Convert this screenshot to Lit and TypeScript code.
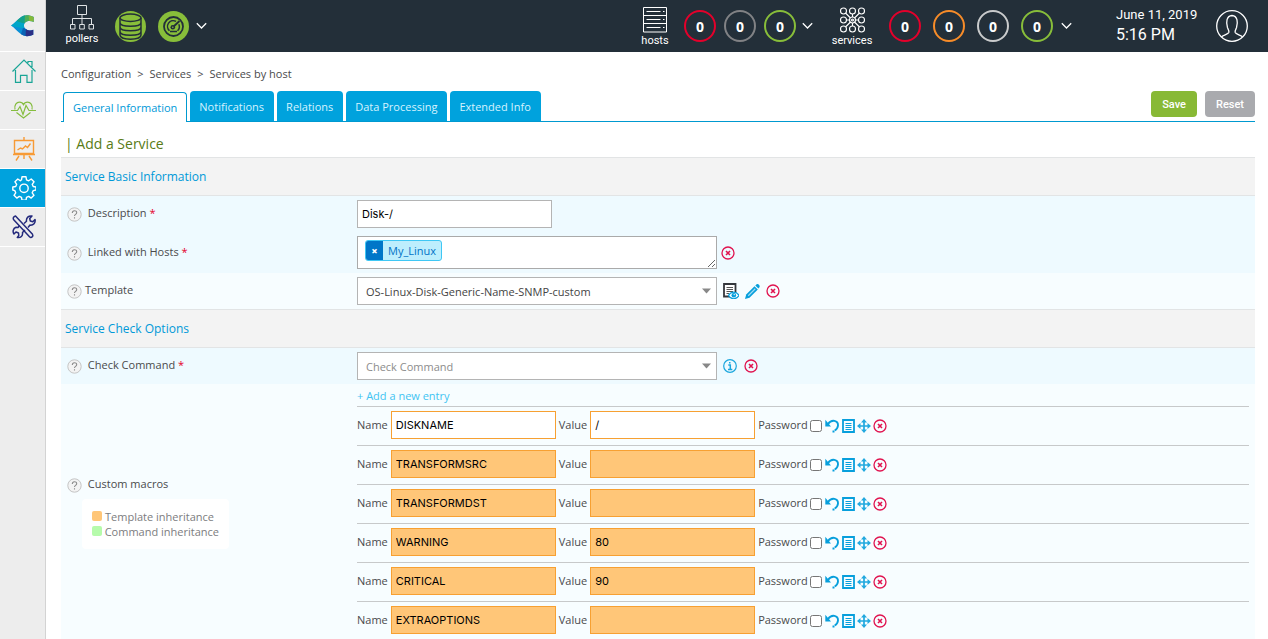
import { LitElement, html, svg, css, nothing } from "lit";
import { customElement } from "lit/decorators.js";
import { classMap } from "lit/directives/class-map.js";

interface Macro {
  name: string;
  value: string;
  inherited: boolean;
}

const MACROS: Macro[] = [
  { name: "DISKNAME", value: "/", inherited: false },
  { name: "TRANSFORMSRC", value: "", inherited: true },
  { name: "TRANSFORMDST", value: "", inherited: true },
  { name: "WARNING", value: "80", inherited: true },
  { name: "CRITICAL", value: "90", inherited: true },
  { name: "EXTRAOPTIONS", value: "", inherited: true },
];

const TABS = ["General Information", "Notifications", "Relations", "Data Processing", "Extended Info"];

const logoIcon = html`<svg width="24" height="22" viewBox="0 0 24 22" aria-hidden="true">
  <clipPath id="logo-c">
    <path d="M22.800 2C18-.500 13-.500 9.500 2.500 7 4.500 3 8.500 0 10.500c3 2 7 6.300 9.500 8.300 3.500 3 8.500 3 12.800 1v-5c-3 1.200-6 .800-7.800-1-2-1.700-2-4.800 0-6.500 2-1.700 5-1.800 8.300-.300z" />
  </clipPath>
  <g clip-path="url(#logo-c)">
    <path d="M0 0h24v22H0z" fill="#0a8fd6" />
    <path d="M17 0h7v9h-7z" fill="#84b93a" />
    <path d="M13 0h4.500l1 8H12z" fill="#4fae57" />
    <path d="M5 0h9l-.500 9L4 6z" fill="#12a18b" />
    <path d="M0 11l5-5 8 2.500v5z" fill="#00a6c8" />
    <path d="M9 22l3-9 4 1-.500 8z" fill="#0b63b5" />
    <path d="M14.500 22l.500-8h9v8z" fill="#2b2f86" />
  </g>
</svg>`;

const homeIcon = html`<svg width="24" height="24" viewBox="0 0 24 24" fill="none" stroke="#19a596" stroke-width="1.2" aria-hidden="true">
  <path d="M.500 12.500L12 1l11.500 11.500M16 4V2.500h4v5.500M3.500 11v12.400h5v-7h6.500v7h5V11" />
</svg>`;

const heartIcon = html`<svg width="25" height="18" viewBox="0 0 25 18" fill="none" stroke="#85bd3f" stroke-width="1.2" aria-hidden="true">
  <path d="M4 8.500C3 4 5.500 1.200 8.500 1.200c2 0 3.300 1 4 2.500.700-1.500 2-2.500 4-2.500 3 0 5.500 2.800 4.500 7.300M5.500 11.500L12.500 17l7-5.500" />
  <path d="M0 9.500h6.500l2.500-4 3 8 3-9 3 5H25" />
</svg>`;

const boardIcon = html`<svg width="22" height="24" viewBox="0 0 22 24" fill="none" stroke="#f79a35" stroke-width="1.4" aria-hidden="true">
  <path d="M11 0v3M1.500 3.500h19v13h-19zM0 17.500h22M6 19l-3 4.500M16 19l3 4.500M11 18v4" />
  <path d="M4.500 13l3-2 2 1 3-3 2 1.500 3-4" />
</svg>`;

const gearIcon = html`<svg width="24" height="24" viewBox="0 0 24 24" fill="none" stroke="#fff" stroke-width="1.400" stroke-linejoin="round" aria-hidden="true">
  <path d="M10 .800h4l.500 3 2.200 1 2.500-1.800 2.800 2.800-1.800 2.500 1 2.200 2.800.500v3l-2.800.600-1 2.200 1.800 2.500-2.800 2.800-2.500-1.700-2.200 1-.500 2.900h-4l-.500-2.900-2.200-1-2.500 1.700-2.800-2.800 1.700-2.500-.900-2.200L.800 14v-3l2.900-.500 1-2.200L3 5.800 5.800 3l2.500 1.800 1.200-1z" />
  <circle cx="12" cy="12.300" r="4.200" />
</svg>`;

const toolsIcon = html`<svg width="24" height="24" viewBox="0 0 24 24" fill="none" stroke="#242a7c" stroke-width="1.500" stroke-linejoin="round" aria-hidden="true">
  <path d="M3.500 1C1.500 1.500.800 3 1.500 4.500l16 17.300c1.800 1.600 4.300-.500 3-2.500z" />
  <path d="M7.500 10.500L6 12.500l-2-.200c-3 1-3.600 4.500-2 6.700L4 17l2.500 1 .300 2.500-1.500 2c3.500.500 5.700-1.500 5.200-5L13 15" />
  <path d="M12 8.500l2.500-2.300C14 2.700 16.500.500 20 1l-2.300 2.500.600 2.500 2.500.700L23 4.500c.800 3.500-1.700 6-5 5.600L16 12.500" />
</svg>`;

const pollerIcon = html`<svg width="24" height="26" viewBox="0 0 24 26" fill="none" stroke="#dfe3e5" stroke-width="1" aria-hidden="true">
  <path d="M7.500.500h9v9h-9zM12 9.500v9.500M2.500 19v-5.500h19V19M.500 19.500h4.500v4.500H.500zM9.700 19.500h4.600v4.500H9.700zM19 19.500h4.500v4.500H19z" />
</svg>`;

const databaseIcon = html`<svg width="31" height="31" viewBox="0 0 31 31" aria-hidden="true">
  <circle cx="15.500" cy="15.500" r="15.500" fill="#88be3a" />
  <g fill="none" stroke="#232f39" stroke-width="1.500">
    <ellipse cx="15.500" cy="6.800" rx="10.500" ry="3.700" />
    <path d="M5 7v4.500c0 5 21 5 21 0V7M5 11.500V16c0 5 21 5 21 0v-4.500M5 16v4.500c0 5 21 5 21 0V16M5 20.500V24c0 5.500 21 5.500 21 0v-3.500" />
  </g>
</svg>`;

const gaugeIcon = html`<svg width="31" height="31" viewBox="0 0 31 31" aria-hidden="true">
  <circle cx="15.500" cy="15.500" r="15.500" fill="#88be3a" />
  <g fill="none" stroke="#232f39">
    <circle cx="15.500" cy="15.500" r="9.500" stroke-width="1.800" />
    <path d="M11.500 19.800A5.800 5.800 0 0 1 18 10.300M20.800 13.200a5.800 5.800 0 0 1-1.300 6.600" stroke-width="1.500" />
    <path d="M12 20.500h7" stroke-width="1.500" />
    <path d="M14.500 16.500l7-6.500" stroke-width="1.800" />
  </g>
  <circle cx="14.800" cy="16.200" r="2.300" fill="#232f39" />
  <circle cx="14.800" cy="16.200" r=".8" fill="#88be3a" />
</svg>`;

const hostIcon = html`<svg width="24" height="26" viewBox="0 0 24 26" fill="none" stroke="#fff" aria-hidden="true">
  <path d="M.500.500h23v24.500H.500zM.500 8.500h23M.500 16.500h23" />
  <path d="M3.500 4.500h14M3.500 12.500h14M3.500 20.500h14M20 4.500h1.500M20 12.500h1.500M20 20.500h1.500" />
</svg>`;

const serviceIcon = html`<svg width="25" height="26" viewBox="0 0 25 26" fill="none" stroke="#fff" stroke-width="1.100" aria-hidden="true">
  ${[3.5, 12.5, 21.5].map((x) => [4, 13, 22].map((y) => svg`<circle cx=${x} cy=${y} r="3" />`))}
  <path d="M5.500 6l5 5M19.500 6l-5 5M5.500 20l5-5M19.500 20l-5-5M12.500 7v3M12.500 16v3M6.500 13h3M15.500 13h3" />
  <circle cx="12.500" cy="13" r="1" />
</svg>`;

const userIcon = html`<svg width="32" height="32" viewBox="0 0 32 32" fill="none" stroke="#fff" stroke-width="1.300" aria-hidden="true">
  <circle cx="16" cy="16" r="15.300" />
  <path d="M5.500 27c1-2 6.500-2.500 7.300-4.500.500-1.500-.500-3-1.300-4.700C9.800 12 10.500 6 16 5.500c5.500.500 6.200 6.500 4.500 12.300-.800 1.700-1.800 3.200-1.300 4.700.800 2 6.300 2.500 7.300 4.500" />
</svg>`;

const chevronIcon = html`<svg width="11" height="8" viewBox="0 0 11 8" fill="none" stroke="#fff" stroke-width="1.300" aria-hidden="true">
  <path d="M.800 1.300l4.700 4.700 4.700-4.700" />
</svg>`;

const helpIcon = html`<svg class="help" width="15" height="15" viewBox="0 0 15 15" role="img" aria-label="Help">
  <circle cx="7.500" cy="7.500" r="6.700" fill="#f3f3f3" stroke="#c4c4c4" />
  <path d="M5.300 6c0-3 4.400-3 4.400-.300 0 1.700-2.200 1.600-2.200 3.300M7.500 10.300v1.200" fill="none" stroke="#8a8a8a" stroke-width="1.100" />
</svg>`;

const deleteIcon = html`<svg width="14" height="14" viewBox="0 0 14 14" fill="none" stroke="#e0134f" aria-hidden="true">
  <circle cx="7" cy="7" r="6" stroke-width="1.300" />
  <path d="M5 5l4 4M9 5l-4 4" stroke-width="1.600" />
</svg>`;

const infoIcon = html`<svg width="14" height="14" viewBox="0 0 14 14" fill="none" stroke="#1ba6dd" aria-hidden="true">
  <circle cx="7" cy="7" r="6.300" stroke-width="1.200" />
  <path d="M5.300 6h2v4.500M5 10.500h4.300M6 3.700h1.500" stroke-width="1.500" />
</svg>`;

const viewIcon = html`<svg width="16" height="16" viewBox="0 0 16 16" fill="none" aria-hidden="true">
  <path d="M1 1h11.500v12.500H1z" fill="#fff" stroke="#34373c" stroke-width="1.800" />
  <path d="M3.500 4.500H10M3.500 6.500H10M3.500 8.500H10M3.500 10.500H6" stroke="#555" />
  <path d="M5.500 12.500c2.500-4.500 8-4.500 10.500 0-2.500 4.300-8 4.300-10.500 0z" fill="#fff" stroke="#079fdc" stroke-width="1.200" />
  <circle cx="10.800" cy="12.300" r="2.300" fill="#079fdc" />
  <circle cx="11.200" cy="11.600" r=".7" fill="#fff" />
</svg>`;

const pencilIcon = html`<svg width="15" height="15" viewBox="0 0 15 15" aria-hidden="true">
  <path d="M0 15l1.200-4.500L9.500 2.300l3.300 3.200-8.300 8.300z" fill="#079fdc" />
  <path d="M10.300 1.500L11.700.300c1.500-.800 3.400 1.200 2.900 2.700l-1.200 1.500z" fill="#079fdc" />
  <path d="M2.800 11.300l7-7 .900.900-7 7z" fill="#9fdcf3" />
</svg>`;

const undoIcon = html`<svg width="15" height="14" viewBox="0 0 15 14" aria-hidden="true">
  <path d="M3 5C6.500 0 13.300 1.200 13 6.500c-.200 2.500-1.500 4-3.300 5" fill="none" stroke="#079fdc" stroke-width="1.900" />
  <path d="M.300.800V7.500H6z" fill="#079fdc" />
  <path d="M7.500 11.500h2v2h-2z" fill="#079fdc" />
</svg>`;

const listIcon = html`<svg width="13" height="14" viewBox="0 0 13 14" fill="none" stroke="#079fdc" aria-hidden="true">
  <path d="M1 1h11v12H1z" stroke-width="1.800" />
  <path d="M3.500 4.500h6M3.500 6.500h6M3.500 8.500h6M3.500 10.500h6" />
</svg>`;

const moveIcon = html`<svg width="14" height="14" viewBox="0 0 14 14" aria-hidden="true">
  <path d="M7 2v10M2 7h10" stroke="#22a9df" stroke-width="1.700" />
  <path d="M7 0l3 3.500H4zM7 14l3-3.500H4zM0 7l3.500-3v6zM14 7l-3.500-3v6z" fill="#22a9df" />
</svg>`;

@customElement("app-root")
export class AppRoot extends LitElement {
  static styles = css`
    :host {
      display: flex;
      height: 100vh;
      overflow: hidden;
      background: #fff;
      color: #4a4a4c;
      font: 11px/16px "Open Sans", sans-serif;
    }
    *, *::before, *::after { box-sizing: border-box; }
    svg { display: block; flex: none; }
    button { border: 0; margin: 0; padding: 0; background: none; cursor: pointer; font: inherit; color: inherit; }
    a { text-decoration: none; color: inherit; }

    .sidebar { flex: none; width: 46px; background: #ededed; border-right: 1px solid #d3d3d3; }
    .side-link {
      display: flex; align-items: center; justify-content: center;
      height: 39px; padding-left: 2px; border-bottom: 1px solid #fff;
    }
    .side-link.logo { height: 52px; padding-left: 0; }
    .side-link.current { background: #00a2dd; }

    .page { flex: 1; min-width: 0; display: flex; flex-direction: column; }
    .topbar {
      flex: none; display: flex; align-items: center; height: 52px;
      padding: 0 20px; background: #232f39; color: #fff;
      font-family: Roboto, sans-serif;
    }
    .kind { display: flex; flex-direction: column; align-items: center; gap: 1px; line-height: 14px; padding-top: 3px; }
    .kind.wide { width: 40px; }
    .kind.narrow { width: 28px; }
    .pollers { display: flex; align-items: center; gap: 12px; }
    .pollers .kind { width: 32px; margin-right: 5px; padding: 0 0 1px; }
    .pollers .more { margin-left: -5px; }
    .hosts, .services { display: flex; align-items: center; }
    .hosts { margin-left: auto; gap: 8px; }
    .hosts .kind { margin-right: 7px; }
    .hosts .more { margin: 0 2px 0 -2px; }
    .services { margin-left: 17px; gap: 12px; }
    .services .kind { margin-right: 5px; }
    .services .more { margin-left: -4px; }
    .count {
      display: flex; align-items: center; justify-content: center;
      width: 32px; height: 32px; border: 2px solid; border-radius: 50%;
    }
    .count span { color: #fff; font: bold 14px/16px "Open Sans", sans-serif; padding-top: 1px; }
    .red { border-color: #e4002b; }
    .grey { border-color: #818285; }
    .orange { border-color: #f78c29; }
    .silver { border-color: #c9cbcc; }
    .green { border-color: #88be3a; }
    .clock { width: 100px; margin-left: 44px; }
    .date { font-size: 13px; line-height: 18px; }
    .time { font-size: 16px; line-height: 22px; }

    .content { flex: 1; min-height: 0; overflow: auto; scrollbar-width: none; padding: 14px 13px 0 15px; }
    .crumbs { display: flex; gap: 6px; line-height: 16px; }
    .tabbar {
      display: flex; align-items: flex-end; justify-content: space-between;
      margin-top: 9px; border-bottom: 1px solid #0099d0; padding-left: 2px;
    }
    .tabs { display: flex; align-items: flex-end; gap: 3px; }
    .tab {
      height: 30px; padding: 0 10px 0 9px; border-radius: 4px 4px 0 0;
      background: #00a2dd; color: #d5f3ff; line-height: 32px;
    }
    .tab.active {
      height: 30px; padding: 0 9px; margin-bottom: -1px; background: #fff; color: #0099d8;
      border: 1px solid #0099d0; border-bottom: 0; line-height: 30px;
    }
    .actions { display: flex; gap: 8px; padding-bottom: 4px; }
    .action {
      height: 26px; padding: 0 11px; border-radius: 4px; color: #fff;
      font: 500 11px/28px Roboto, sans-serif;
    }
    .save { background: #88b935; }
    .reset { background: #a9aaae; }
    h1 { margin: 0; padding: 12px 4px 3px; font-size: 14px; line-height: 20px; font-weight: 400; color: #587b16; }
    h2 {
      margin: 0; padding: 0 4px; border: solid #e2e4e5; border-width: 1px 0;
      background: #f3f3f3; color: #0099d8; font-size: 12px; line-height: 37px; font-weight: 400;
    }
    .row { display: grid; grid-template-columns: 296px 1fr; padding: 4px 6px 4px 0; background: #f7fdff; }
    .row.tint { background: #eefaff; }
    .caption { padding-left: 6px; }
    .row > .caption { padding-top: 5px; }
    .row > .caption.tall { padding-top: 8px; }
    .help { display: inline-block; vertical-align: -5px; margin-right: 3px; }
    .req { color: #e4002b; }
    .field { display: flex; align-items: center; gap: 6px; }
    .field.close { gap: 4px; }
    .text {
      height: 28px; padding: 0 4px; border: 1px solid #b4b4b4; border-radius: 0; outline: 0;
      background: #fff; color: #000; font: 11px/16px Inter, sans-serif;
    }
    .description { width: 195px; }
    .picker { position: relative; width: 360px; }
    .picker svg { position: absolute; right: 6px; top: 11px; pointer-events: none; }
    .select {
      appearance: none; display: block; width: 100%; height: 28px; padding: 1px 24px 0 8px; outline: 0;
      border: 1px solid #b4b4b4; border-radius: 0; background: #fff; color: #444; font: 11px/16px "Open Sans", sans-serif;
    }
    .select.empty { color: #8c8c8c; }
    .multi {
      display: flex; align-items: flex-start; width: 360px; height: 33px; padding: 3px 7px;
      border: 1px solid #aaa; background: #fff; resize: vertical; overflow: hidden;
    }
    .chip { display: flex; height: 21px; border: 1px solid #3fc7f4; border-radius: 3px; background: #bdeefd; color: #0072c6; line-height: 19px; overflow: hidden; }
    .chip button { width: 17px; background: #0076c8; color: #fff; font-weight: 800; line-height: 17px; }
    .chip span { padding: 0 5px; }
    .search { flex: 1; min-width: 0; height: 20px; border: 0; outline: 0; background: none; }
    .tools { display: flex; align-items: center; gap: 7px; }
    .tools.tight { gap: 6px; }

    .row.macros { align-items: center; padding: 0 6px 0 0; }
    .row.macros > .caption { padding-top: 1px; }
    .legend {
      width: 147px; margin: 6px 0 0 15px; padding: 10px 10px; border-radius: 4px;
      background: #fff; color: #7c7c7e; line-height: 15px; list-style: none;
    }
    .legend li { display: flex; gap: 3px; white-space: nowrap; }
    .swatch { width: 10px; height: 10px; border-radius: 2px; margin-top: 2px; }
    .swatch.template { background: #ffc678; }
    .swatch.command { background: #b6fbab; }
    .add { display: block; height: 22px; padding-top: 2px; line-height: 20px; color: #3fc4f2; }
    .macro { display: flex; align-items: center; gap: 3px; padding: 4px 0 6px; border-top: 1px solid #c7c9ca; }
    .macro .text { width: 165px; border-color: #f7a032; }
    .macro .text.inherited { background: #ffc678; }
    .macro input[type="checkbox"] { width: 12px; height: 12px; margin: 2px 0 0 -1px; }
    .macro .tools { gap: 2px; padding-top: 2px; }
  `;

  private count(tone: string) {
    return html`<a href="#" class="count ${tone}"><span>0</span></a>`;
  }

  private more(label: string) {
    return html`<button class="more" aria-label=${label}>${chevronIcon}</button>`;
  }

  private arrow() {
    return html`<svg width="9" height="6" viewBox="0 0 9 6" aria-hidden="true"><path d="M0 .500h9L4.500 5.500z" fill="#888" /></svg>`;
  }

  private required() {
    return html` <span class="req">*</span>`;
  }

  private macro(macro: Macro, i: number) {
    const box = classMap({ text: true, inherited: macro.inherited });
    return html`<div class="macro">
      <label for="name-${i}">Name</label>
      <input id="name-${i}" class=${box} .value=${macro.name} />
      <label for="value-${i}">Value</label>
      <input id="value-${i}" class=${box} .value=${macro.value} />
      <label for="password-${i}">Password</label>
      <input id="password-${i}" type="checkbox" />
      <div class="tools">
        <button aria-label="Undo">${undoIcon}</button>
        <button aria-label="Describe">${listIcon}</button>
        <button aria-label="Move">${moveIcon}</button>
        <button aria-label="Delete">${deleteIcon}</button>
      </div>
    </div>`;
  }

  render() {
    return html`
      <nav class="sidebar" aria-label="Main">
        <a href="#" class="side-link logo" aria-label="Centreon">${logoIcon}</a>
        <a href="#" class="side-link" aria-label="Home">${homeIcon}</a>
        <a href="#" class="side-link" aria-label="Monitoring">${heartIcon}</a>
        <a href="#" class="side-link" aria-label="Reporting">${boardIcon}</a>
        <a href="#" class="side-link current" aria-label="Configuration">${gearIcon}</a>
        <a href="#" class="side-link" aria-label="Administration">${toolsIcon}</a>
      </nav>
      <div class="page">
        <header class="topbar">
          <div class="pollers">
            <a href="#" class="kind">${pollerIcon}<span>pollers</span></a>
            ${databaseIcon}${gaugeIcon}${this.more("Poller details")}
          </div>
          <div class="hosts">
            <a href="#" class="kind narrow">${hostIcon}<span>hosts</span></a>
            ${["red", "grey", "green"].map((tone) => this.count(tone))}
            ${this.more("Host details")}
          </div>
          <div class="services">
            <a href="#" class="kind wide">${serviceIcon}<span>services</span></a>
            ${["red", "orange", "silver", "green"].map((tone) => this.count(tone))}
            ${this.more("Service details")}
          </div>
          <div class="clock">
            <div class="date">June 11, 2019</div>
            <div class="time">5:16 PM</div>
          </div>
          <button aria-label="Profile">${userIcon}</button>
        </header>
        <main class="content">
          <nav class="crumbs" aria-label="Breadcrumb">
            <a href="#">Configuration</a><span>&gt;</span><a href="#">Services</a><span>&gt;</span><a href="#">Services by host</a>
          </nav>
          <div class="tabbar">
            <div class="tabs">
              ${TABS.map((tab, i) => html`<a href="#" class=${classMap({ tab: true, active: i === 0 })} aria-current=${i === 0 ? "page" : nothing}>${tab}</a>`)}
            </div>
            <div class="actions">
              <button class="action save">Save</button>
              <button class="action reset">Reset</button>
            </div>
          </div>
          <h1>| Add a Service</h1>
          <h2>Service Basic Information</h2>
          <div class="row tint">
            <div class="caption">${helpIcon} <label for="description">Description</label>${this.required()}</div>
            <div class="field"><input id="description" class="text description" value="Disk-/" /></div>
          </div>
          <div class="row tint">
            <div class="caption tall">${helpIcon} <label for="hosts">Linked with Hosts</label>${this.required()}</div>
            <div class="field close">
              <div class="multi">
                <div class="chip"><button aria-label="Remove My_Linux">×</button><span>My_Linux</span></div>
                <input id="hosts" class="search" />
              </div>
              <button aria-label="Clear hosts">${deleteIcon}</button>
            </div>
          </div>
          <div class="row">
            <div class="caption">${helpIcon}<label for="template">Template</label></div>
            <div class="field">
              <div class="picker">
                <select id="template" class="select"><option>OS-Linux-Disk-Generic-Name-SNMP-custom</option></select>
                ${this.arrow()}
              </div>
              <div class="tools tight">
                <button aria-label="View template">${viewIcon}</button>
                <button aria-label="Edit template">${pencilIcon}</button>
                <button aria-label="Clear template">${deleteIcon}</button>
              </div>
            </div>
          </div>
          <h2>Service Check Options</h2>
          <div class="row tint">
            <div class="caption">${helpIcon} <label for="command">Check Command</label>${this.required()}</div>
            <div class="field">
              <div class="picker">
                <select id="command" class="select empty"><option>Check Command</option></select>
                ${this.arrow()}
              </div>
              <div class="tools">
                <button aria-label="Command information">${infoIcon}</button>
                <button aria-label="Clear command">${deleteIcon}</button>
              </div>
            </div>
          </div>
          <div class="row macros">
            <div class="caption">
              ${helpIcon} <span>Custom macros</span>
              <ul class="legend">
                <li><span class="swatch template"></span>Template inheritance</li>
                <li><span class="swatch command"></span>Command inheritance</li>
              </ul>
            </div>
            <div>
              <a href="#" class="add">+ Add a new entry</a>
              ${MACROS.map((macro, i) => this.macro(macro, i))}
            </div>
          </div>
        </main>
      </div>
    `;
  }
}
